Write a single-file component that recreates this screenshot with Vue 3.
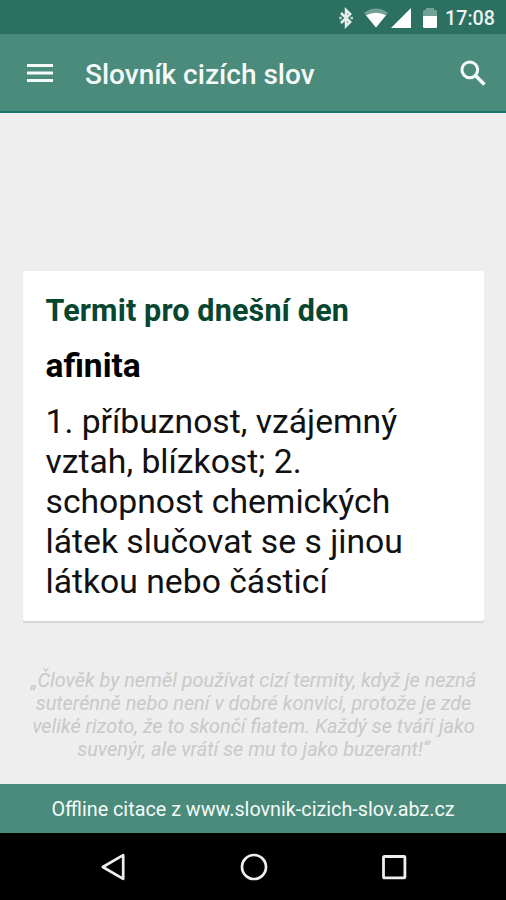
<script setup>
import { ref } from "vue";

const time = ref("17:08");

const term = ref({
  name: "afinita",
  lines: [
    "1. příbuznost, vzájemný",
    "vztah, blízkost; 2.",
    "schopnost chemických",
    "látek slučovat se s jinou",
    "látkou nebo částicí",
  ],
});

const quote = [
  "„Člověk by neměl používat cizí termity, když je nezná",
  "suterénně nebo není v dobré konvici, protože je zde",
  "veliké rizoto, že to skončí fiatem. Každý se tváří jako",
  "suvenýr, ale vrátí se mu to jako buzerant!“",
];
</script>

<template>
  <div class="screen">
    <!-- status bar -->
    <div class="status">
      <svg class="bluetooth" width="16" height="22" viewBox="0 0 16 22">
        <path d="M3 6 L12.2 15 L8 19 V3 L12.2 7 L3 16" fill="none" stroke="#e4efec" stroke-width="2.5" />
        <path d="M1.2 11h2.6M12.4 11h2.6" stroke="#b9d2cb" stroke-width="2.4" />
      </svg>
      <svg class="wifi" width="26" height="20" viewBox="0 0 26 20">
        <path d="M1 4.8 Q13 -3.8 25 4.8 L13 19.5Z" fill="#70a296" />
        <path d="M3 7.2 Q13 2.2 23 7.2 L13 19.5Z" fill="#fff" />
      </svg>
      <svg class="signal" width="20" height="20" viewBox="0 0 20 20">
        <path d="M20 0V20H0Z" fill="#fff" />
      </svg>
      <svg class="battery" width="14" height="20" viewBox="0 0 14 20">
        <path d="M0 9V3.5Q0 2 1.5 2H3V0H11V2H12.5Q14 2 14 3.5V9Z" fill="#70a296" />
        <path d="M0 8H14V18.5Q14 20 12.5 20H1.5Q0 20 0 18.5Z" fill="#fff" />
      </svg>
      <span class="time">{{ time }}</span>
    </div>

    <header class="toolbar">
      <svg class="menu" width="26" height="20" viewBox="0 0 26 20">
        <path d="M0 2.5H26M0 10H26M0 17.5H26" stroke="#f4faf8" stroke-width="3" />
      </svg>
      <h1>Slovník cizích slov</h1>
      <svg class="search" width="26" height="26" viewBox="0 0 26 26">
        <circle cx="9.8" cy="9.8" r="7.9" fill="none" stroke="#f4faf8" stroke-width="3" />
        <path d="M15.2 15.2L24.4 24.4" stroke="#f4faf8" stroke-width="3.6" />
      </svg>
    </header>

    <main class="content">
      <section class="card">
        <h2>Termit pro dnešní den</h2>
        <h3>{{ term.name }}</h3>
        <p class="definition">
          <span v-for="line in term.lines" :key="line">{{ line }}</span>
        </p>
      </section>
      <p class="quote">
        <span v-for="line in quote" :key="line">{{ line }}</span>
      </p>
    </main>

    <footer class="source"><span>Offline citace z www.slovnik-cizich-slov.abz.cz</span></footer>

    <!-- android navigation -->
    <nav class="navbar">
      <svg width="28" height="28" viewBox="0 0 28 28">
        <path d="M24.2 2.2V25.8L3.8 14Z" fill="none" stroke="#eee" stroke-width="2.7" stroke-linejoin="round" />
      </svg>
      <svg width="28" height="28" viewBox="0 0 28 28">
        <circle cx="14" cy="14" r="12" fill="none" stroke="#eee" stroke-width="2.7" />
      </svg>
      <svg width="28" height="28" viewBox="0 0 28 28">
        <rect x="3.5" y="3.5" width="21.4" height="21.4" rx="0.8" fill="none" stroke="#eee" stroke-width="2.8" />
      </svg>
    </nav>
  </div>
</template>

<style>
body {
  margin: 0;
}
</style>

<style scoped>
.screen {
  width: 506px;
  height: 900px;
  display: flex;
  flex-direction: column;
  overflow: hidden;
  background: #eeeeee;
  font-family: Roboto, "Noto Sans", sans-serif;
}

h1,
h2,
h3,
p {
  margin: 0;
  white-space: nowrap;
}

svg {
  display: block;
  flex: none;
}

.status {
  height: 34px;
  flex: none;
  box-sizing: border-box;
  padding: 1px 11px 0 338px;
  display: flex;
  align-items: center;
  background: #2b7061;
}

.wifi {
  margin-left: 9px;
}

.signal {
  margin-left: 2px;
}

.battery {
  margin-left: 12px;
}

.time {
  margin-left: auto;
  padding-top: 2px;
  color: #eaf3f0;
  font-size: 19.7px;
  font-weight: 500;
  line-height: 32px;
}

.toolbar {
  height: 79px;
  flex: none;
  box-sizing: border-box;
  padding: 1px 20px 0 27px;
  display: flex;
  align-items: center;
  background: #4b8b7c;
  border-bottom: 2px solid #167566;
}

.toolbar h1 {
  margin-left: 32px;
  padding-top: 3px;
  color: #f4faf8;
  font-size: 28px;
  font-weight: 500;
  line-height: 34px;
}

.search {
  margin-left: auto;
}

.content {
  flex: 1;
  padding: 158px 22px 0 23px;
}

.card {
  height: 350px;
  box-sizing: border-box;
  padding: 22px 23px 0 22.5px;
  background: #fff;
  border-radius: 2px;
  box-shadow: 0 2px 1px rgba(0, 0, 0, 0.1);
}

.card h2 {
  color: #07462f;
  font-size: 30.5px;
  font-weight: 700;
  letter-spacing: 0.15px;
  line-height: 36px;
}

.card h3 {
  margin-top: 17px;
  color: #000;
  font-size: 33.5px;
  font-weight: 700;
  line-height: 40px;
}

.definition {
  margin-top: 16px;
  color: #111;
  font-size: 33.7px;
  line-height: 39.9px;
}

.definition span,
.quote span {
  display: block;
}

.quote {
  margin-top: 48px;
  color: #c9c9c9;
  font-size: 19.87px;
  font-style: italic;
  line-height: 23.1px;
  text-align: center;
}

.source {
  height: 49px;
  flex: none;
  box-sizing: border-box;
  padding-top: 2px;
  display: flex;
  align-items: center;
  justify-content: center;
  background: #4b8b7c;
  color: #f4faf8;
  font-size: 19.78px;
  white-space: nowrap;
}

.navbar {
  height: 67px;
  flex: none;
  box-sizing: border-box;
  padding: 0 98px 0 99px;
  display: flex;
  align-items: center;
  justify-content: space-between;
  background: #000;
}
</style>
